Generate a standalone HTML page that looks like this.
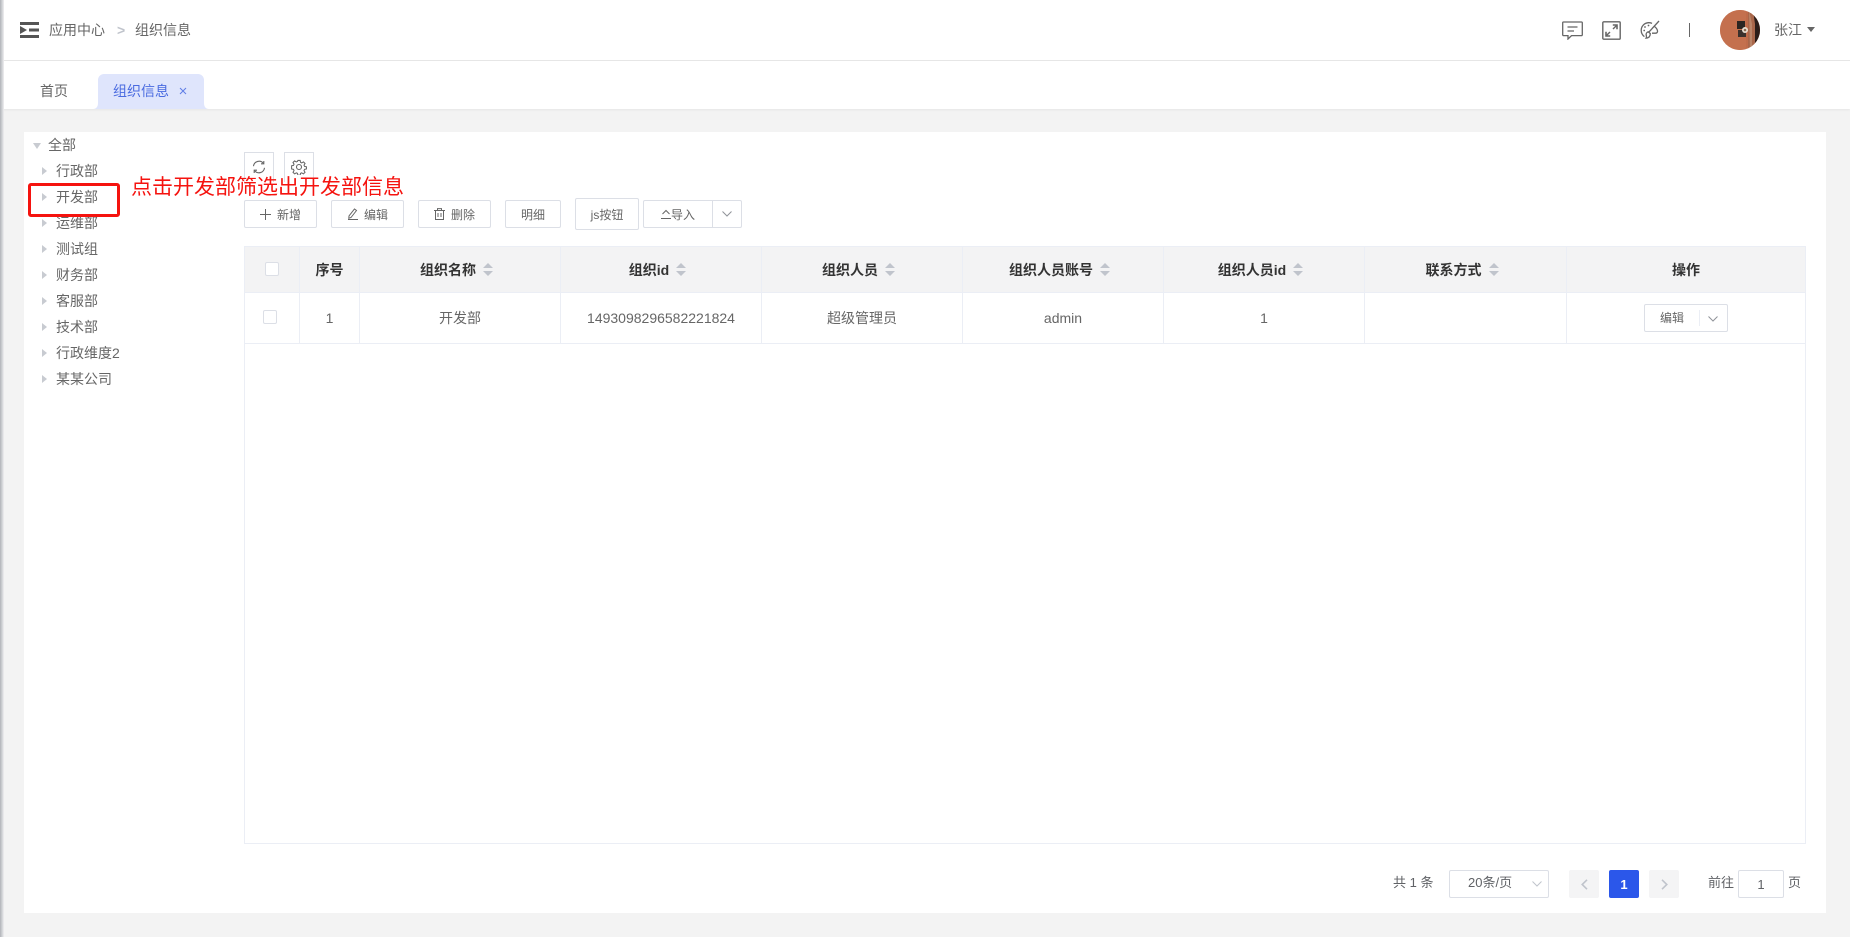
<!DOCTYPE html>
<html lang="zh"><head><meta charset="utf-8"><title>组织信息</title>
<style>
*{box-sizing:border-box}
html,body{margin:0;padding:0;width:1850px;height:937px;overflow:hidden;background:#f3f3f3;font-family:"Liberation Sans","Noto Sans CJK SC",sans-serif;color:#666;font-size:14px}
.a{position:absolute;white-space:nowrap}
.t{position:absolute;white-space:nowrap;line-height:20px;height:20px}
.tree{font-size:14px;color:#666;left:56px}
.arr{position:absolute;left:42px;width:0;height:0;border-left:5px solid #c8cbd1;border-top:4.5px solid transparent;border-bottom:4.5px solid transparent}
.btn{position:absolute;top:200px;height:28px;background:#fff;border:1px solid #dcdfe6;border-radius:2px;font-size:12px;color:#666;display:flex;align-items:center;justify-content:center;white-space:nowrap}
.l{position:absolute;background:#ebeef5}
.c{position:absolute;display:flex;align-items:center;justify-content:center;white-space:nowrap}
.th{top:247px;height:45px;font-weight:bold;color:#333}
.td{top:293px;height:50px;color:#666}
.s{margin-left:7px;margin-right:7px;display:block}
.cb{position:absolute;width:14px;height:14px;background:#fff;border:1px solid #dcdfe6;border-radius:2px}
</style></head>
<body>
<!-- left edge -->
<div class="a" style="left:0;top:0;width:4px;height:937px;background:linear-gradient(90deg,#b0b3b8,#d5d7da 60%,#f0f0f1);z-index:5"></div>

<!-- header -->
<div class="a" style="left:0;top:0;width:1850px;height:61px;background:#fff;border-bottom:1px solid #e6e6e6"></div>
<svg class="a" style="left:20px;top:22px" width="19" height="16" viewBox="0 0 19 16"><rect width="19" height="3" fill="#555"/><rect y="13" width="19" height="3" fill="#555"/><rect x="9" y="6.500" width="10" height="3" fill="#555"/><path d="M0 4v8l7-4z" fill="#555"/></svg>
<div class="t" style="left:49px;top:20px;color:#666">应用中心</div>
<div class="t" style="left:117px;top:20px;color:#c0c4cc;font-size:14px;font-weight:bold">&gt;</div>
<div class="t" style="left:135px;top:20px;color:#666">组织信息</div>

<svg class="a" style="left:1562px;top:21px" width="21" height="19" viewBox="0 0 21 19" fill="none" stroke="#666" stroke-width="1.300"><path d="M1.500 1h18a.8.8 0 0 1 .8.8v12a.8.8 0 0 1-.8.8H9.500L6 18v-3.400H1.500a.8.8 0 0 1-.8-.8V1.800a.8.8 0 0 1 .8-.8z"/><path d="M5.500 6h10M5.500 10h6.500"/></svg>
<svg class="a" style="left:1602px;top:21px" width="19" height="19" viewBox="0 0 19 19" fill="none" stroke="#666" stroke-width="1.400"><rect x=".8" y=".8" width="17.400" height="17.400" rx="1"/><path d="M11 8l3.800-3.800M4.200 14.800L8 11"/><path d="M10.800 4h4.200v4.200M4 10.800V15h4.200" stroke-width="1.600"/></svg>
<svg class="a" style="left:1640px;top:20px" width="20" height="20" viewBox="0 0 20 20" fill="none" stroke="#666" stroke-width="1.300"><path d="M12 3.400C10.800 2.800 9.500 2.600 8.400 2.700 4.400 3 1.200 6.200 1.200 10.300c0 2.700 1.300 5 3.200 6.300M13.800 6c1.600 1 3.400 2.700 3.700 5 .2 1.400-.8 2.200-2 2.200H12"/><path d="M19 1L8.500 12.500"/><path d="M8.300 11.800l2 1.800c0 1.900-.8 4.200-4.200 4.500.8-1.200.2-2.600 0-3.600 0-1 .9-2.300 2.200-2.700z"/><circle cx="5" cy="7" r=".9" fill="#666" stroke="none"/><circle cx="8.500" cy="5.500" r=".9" fill="#666" stroke="none"/><circle cx="4.200" cy="10.500" r=".9" fill="#666" stroke="none"/></svg>
<div class="a" style="left:1689px;top:23px;width:1px;height:14px;background:#666"></div>
<svg class="a" style="left:1720px;top:10px" width="40" height="40" viewBox="0 0 40 40"><defs><clipPath id="cp"><circle cx="20" cy="20" r="20"/></clipPath></defs><g clip-path="url(#cp)"><rect width="40" height="40" fill="#bf6b4a"/><rect x="0" y="0" width="26" height="40" fill="#c4704e"/><rect x="28" y="0" width="12" height="40" fill="#a8664a"/><path d="M33 0l2 14v26h5V0z" fill="#2a1c18"/><path d="M29 0l3 14v26h-2z" fill="#b98468"/><rect x="17" y="11" width="8" height="8" fill="#2b2522"/><rect x="18" y="20" width="8" height="7" fill="#3a302c"/><circle cx="25" cy="20" r="3" fill="#e9dfd2"/><circle cx="25" cy="20" r="1.300" fill="#8a6a52"/></g></svg>
<div class="t" style="left:1774px;top:20px">张江</div>
<div class="a" style="left:1807px;top:27px;width:0;height:0;border-top:5px solid #666;border-left:4px solid transparent;border-right:4px solid transparent"></div>

<!-- tabs -->
<div class="a" style="left:0;top:61px;width:1850px;height:48px;background:#fff;box-shadow:0 1px 2px rgba(0,0,0,.06)"></div>
<div class="t" style="left:40px;top:81px;color:#666">首页</div>
<svg class="a" style="left:93px;top:74px" width="116" height="35" viewBox="0 0 116 35"><path d="M0 35c3 0 5-2 5-6V6a6 6 0 0 1 6-6h94a6 6 0 0 1 6 6v23c0 4 2 6 5 6z" fill="#dfe5fc"/></svg>
<div class="t" style="left:113px;top:81px;color:#4a6be0">组织信息</div>
<svg class="a" style="left:179px;top:87px" width="8" height="8" viewBox="0 0 8 8" stroke="#5f7de6" stroke-width="1"><path d="M1 1l6 6M7 1L1 7"/></svg>

<!-- panel -->
<div class="a" style="left:24px;top:132px;width:1802px;height:781px;background:#fff"></div>

<!-- tree -->
<div class="a" style="left:33px;top:143px;width:0;height:0;border-top:6px solid #c8cbd1;border-left:4.500px solid transparent;border-right:4.500px solid transparent"></div>
<div class="t tree" style="left:48px;top:135px">全部</div>
<i class="arr" style="top:167px"></i><div class="t tree" style="top:161px">行政部</div>
<i class="arr" style="top:193px"></i><div class="t tree" style="top:187px">开发部</div>
<i class="arr" style="top:219px"></i><div class="t tree" style="top:213px">运维部</div>
<i class="arr" style="top:245px"></i><div class="t tree" style="top:239px">测试组</div>
<i class="arr" style="top:271px"></i><div class="t tree" style="top:265px">财务部</div>
<i class="arr" style="top:297px"></i><div class="t tree" style="top:291px">客服部</div>
<i class="arr" style="top:323px"></i><div class="t tree" style="top:317px">技术部</div>
<i class="arr" style="top:349px"></i><div class="t tree" style="top:343px">行政维度2</div>
<i class="arr" style="top:375px"></i><div class="t tree" style="top:369px">某某公司</div>

<!-- icon buttons -->
<div class="a" style="left:244px;top:152px;width:30px;height:30px;border:1px solid #dcdfe6;border-bottom:0;background:#fff"></div>
<div class="a" style="left:284px;top:152px;width:30px;height:30px;border:1px solid #dcdfe6;border-bottom:0;background:#fff"></div>
<svg class="a" style="left:252px;top:160px" width="14" height="14" viewBox="0 0 14 14" fill="none" stroke="#666" stroke-width="1.100"><path d="M1.500 6.200A5.600 5.600 0 0 1 11.500 3.400M12.500 7.800A5.600 5.600 0 0 1 2.500 10.600"/><path d="M11.800 1v2.800H9M2.200 13v-2.800H5"/></svg>
<svg class="a" style="left:291px;top:159px" width="16" height="16" viewBox="0 0 16 16" fill="none" stroke="#666" stroke-width="1.100"><path d="M6.800 1h2.400l.4 2 1.300.6 1.800-1.100 1.700 1.700-1.100 1.800.6 1.300 2 .4v2.400l-2 .4-.6 1.300 1.100 1.800-1.700 1.700-1.800-1.100-1.300.6-.4 2H6.800l-.4-2-1.300-.6-1.800 1.100-1.700-1.700 1.100-1.800-.6-1.300-2-.4V6.700l2-.4.600-1.300-1.100-1.800 1.700-1.700 1.800 1.100 1.300-.6z" transform="translate(.5 .5) scale(.94)"/><circle cx="8" cy="8" r="2.500"/></svg>

<!-- toolbar -->
<div class="btn" style="left:244px;width:73px"><svg width="11" height="11" viewBox="0 0 11 11" stroke="#666" style="margin-right:6px"><path d="M5.500 0v11M0 5.500h11"/></svg>新增</div>
<div class="btn" style="left:331px;width:73px"><svg width="12" height="12" viewBox="0 0 12 12" fill="none" stroke="#666" style="margin-right:5px"><path d="M7.500 1l2 1.500L4 9.500l-2.200.8.200-2.300zM1 11.500h10"/></svg>编辑</div>
<div class="btn" style="left:418px;width:73px"><svg width="11" height="12" viewBox="0 0 11 12" fill="none" stroke="#666" style="margin-right:6px"><path d="M0 2.500h11M3.500 2.500V.6h4v1.900M1.500 2.500v9h8v-9M4 5v4M7 5v4"/></svg>删除</div>
<div class="btn" style="left:505px;width:56px">明细</div>
<div class="btn" style="left:575px;width:64px;top:198px;height:32px">js按钮</div>
<div class="btn" style="left:643px;width:70px;border-radius:2px 0 0 2px"><svg width="10" height="11" viewBox="0 0 10 11" fill="none" stroke="#666"><path d="M1.500 5L5 1.500 8.500 5M0 9.500h10"/></svg><span>导入</span></div>
<div class="btn" style="left:712px;width:30px;border-radius:0 2px 2px 0"><svg width="10" height="6" viewBox="0 0 10 6" fill="none" stroke="#909399"><path d="M.5.500L5 5 9.500.500"/></svg></div>

<!-- annotation -->
<div class="a" style="left:28px;top:183px;width:92px;height:34px;border:3px solid #f5130f;border-radius:3px"></div>
<div class="t" style="left:131px;top:174px;height:28px;line-height:28px;font-size:21px;color:#f5130f">点击开发部筛选出开发部信息</div>

<!-- table -->
<div class="a" style="left:244px;top:246px;width:1562px;height:598px;border:1px solid #ebeef5;background:#fff"></div>
<div class="a" style="left:245px;top:247px;width:1560px;height:45px;background:#f3f3f4"></div>
<div class="l" style="left:245px;top:292px;width:1560px;height:1px"></div>
<div class="l" style="left:245px;top:343px;width:1560px;height:1px"></div>
<div class="l" style="left:299px;top:247px;width:1px;height:96px"></div>
<div class="l" style="left:359px;top:247px;width:1px;height:96px"></div>
<div class="l" style="left:560px;top:247px;width:1px;height:96px"></div>
<div class="l" style="left:761px;top:247px;width:1px;height:96px"></div>
<div class="l" style="left:962px;top:247px;width:1px;height:96px"></div>
<div class="l" style="left:1163px;top:247px;width:1px;height:96px"></div>
<div class="l" style="left:1364px;top:247px;width:1px;height:96px"></div>
<div class="l" style="left:1566px;top:247px;width:1px;height:96px"></div>

<div class="cb" style="left:265px;top:262px"></div>
<div class="c th" style="left:300px;width:59px">序号</div>
<div class="c th" style="left:360px;width:200px">组织名称<svg class="s" width="10" height="13" viewBox="0 0 10 13" fill="#c0c4cc"><path d="M0 5l5-5 5 5zM0 8l5 5 5-5z"/></svg></div>
<div class="c th" style="left:561px;width:200px">组织id<svg class="s" width="10" height="13" viewBox="0 0 10 13" fill="#c0c4cc"><path d="M0 5l5-5 5 5zM0 8l5 5 5-5z"/></svg></div>
<div class="c th" style="left:762px;width:200px">组织人员<svg class="s" width="10" height="13" viewBox="0 0 10 13" fill="#c0c4cc"><path d="M0 5l5-5 5 5zM0 8l5 5 5-5z"/></svg></div>
<div class="c th" style="left:963px;width:200px">组织人员账号<svg class="s" width="10" height="13" viewBox="0 0 10 13" fill="#c0c4cc"><path d="M0 5l5-5 5 5zM0 8l5 5 5-5z"/></svg></div>
<div class="c th" style="left:1164px;width:200px">组织人员id<svg class="s" width="10" height="13" viewBox="0 0 10 13" fill="#c0c4cc"><path d="M0 5l5-5 5 5zM0 8l5 5 5-5z"/></svg></div>
<div class="c th" style="left:1365px;width:201px">联系方式<svg class="s" width="10" height="13" viewBox="0 0 10 13" fill="#c0c4cc"><path d="M0 5l5-5 5 5zM0 8l5 5 5-5z"/></svg></div>
<div class="c th" style="left:1567px;width:238px">操作</div>

<div class="cb" style="left:263px;top:310px"></div>
<div class="c td" style="left:300px;width:59px">1</div>
<div class="c td" style="left:360px;width:200px">开发部</div>
<div class="c td" style="left:561px;width:200px">1493098296582221824</div>
<div class="c td" style="left:762px;width:200px">超级管理员</div>
<div class="c td" style="left:963px;width:200px">admin</div>
<div class="c td" style="left:1164px;width:200px">1</div>
<div class="a" style="left:1644px;top:304px;width:84px;height:28px;border:1px solid #dcdfe6;border-radius:2px;background:#fff"></div>
<div class="t" style="left:1660px;top:308px;font-size:12px">编辑</div>
<div class="a" style="left:1699px;top:310px;width:1px;height:16px;background:#ebeef5"></div>
<svg class="a" style="left:1708px;top:316px" width="10" height="6" viewBox="0 0 10 6" fill="none" stroke="#909399"><path d="M.5.500L5 5 9.500.500"/></svg>

<!-- pagination -->
<div class="t" style="left:1393px;top:873px;font-size:13px;color:#606266">共 1 条</div>
<div class="a" style="left:1449px;top:870px;width:100px;height:28px;border:1px solid #dcdfe6;border-radius:2px;background:#fff"></div>
<div class="t" style="left:1468px;top:873px;font-size:13px;color:#606266">20条/页</div>
<svg class="a" style="left:1532px;top:881px" width="10" height="6" viewBox="0 0 10 6" fill="none" stroke="#c0c4cc"><path d="M.5.500L5 5 9.500.500"/></svg>
<div class="c" style="left:1569px;top:870px;width:30px;height:28px;background:#f4f4f5;border-radius:2px"><svg width="7" height="11" viewBox="0 0 7 11" fill="none" stroke="#c0c4cc" stroke-width="1.600"><path d="M6 .800L1.200 5.500 6 10.200"/></svg></div>
<div class="c" style="left:1609px;top:870px;width:30px;height:28px;background:#2b57ea;border-radius:2px;color:#fff;font-weight:bold;font-size:13px">1</div>
<div class="c" style="left:1649px;top:870px;width:30px;height:28px;background:#f4f4f5;border-radius:2px"><svg width="7" height="11" viewBox="0 0 7 11" fill="none" stroke="#c0c4cc" stroke-width="1.600"><path d="M1 .800L5.800 5.500 1 10.200"/></svg></div>
<div class="t" style="left:1708px;top:873px;font-size:13px;color:#606266">前往</div>
<div class="c" style="left:1738px;top:870px;width:46px;height:28px;border:1px solid #dcdfe6;border-radius:2px;background:#fff;font-size:13px;color:#606266">1</div>
<div class="t" style="left:1788px;top:873px;font-size:13px;color:#606266">页</div>
</body></html>
